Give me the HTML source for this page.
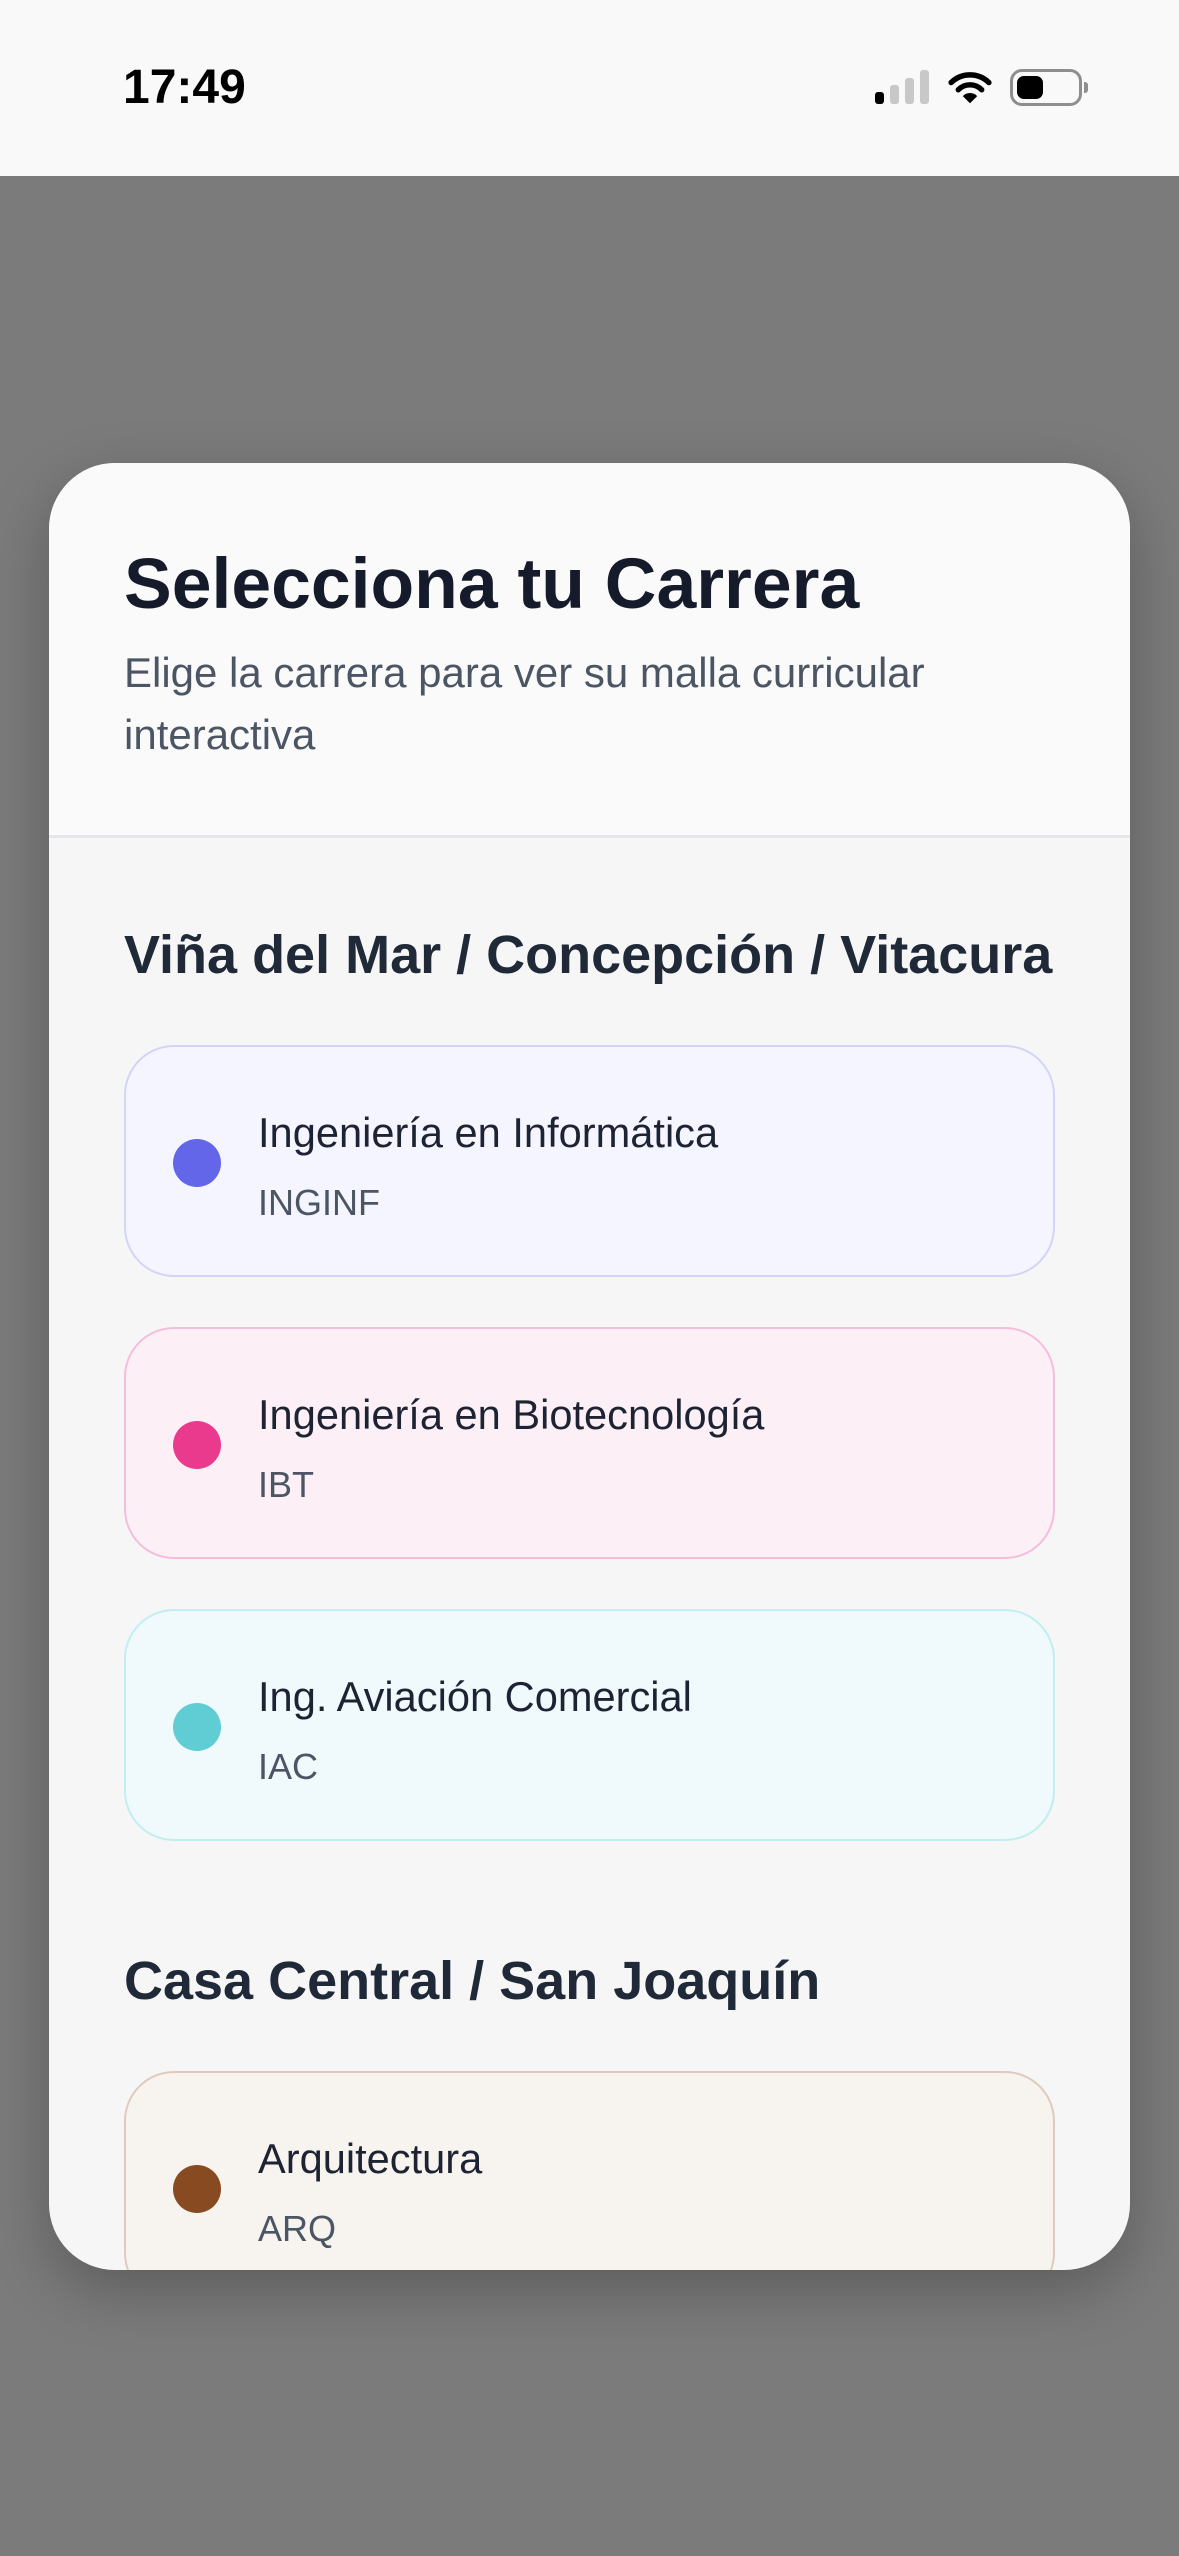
<!DOCTYPE html>
<html><head><meta charset="utf-8"><style>
*{margin:0;padding:0;box-sizing:border-box}
body{width:1179px;height:2556px;background:#7b7b7b;position:relative;overflow:hidden;font-family:"Liberation Sans",sans-serif}
.sb{position:absolute;left:0;top:0;width:1179px;height:176px;background:#f9f9f9}
.t{position:absolute;line-height:1;white-space:nowrap}
.modal{position:absolute;left:49px;top:463px;width:1081px;height:1807px;border-radius:66px;overflow:hidden;background:#f6f6f6;box-shadow:0 20px 60px rgba(0,0,0,.25)}
.hdr{position:absolute;left:0;top:0;width:100%;height:375px;background:#fafafa;border-bottom:3px solid #e5e6ea}
.card{position:absolute;left:75px;width:931px;height:232px;border:2.5px solid;border-radius:50px}
.dot{position:absolute;left:47px;top:92px;width:48px;height:48px;border-radius:50%}
.ct{position:absolute;left:132px;top:65px;font-size:41.6px;color:#1e2333;line-height:1;white-space:nowrap}
.cc{position:absolute;left:132px;top:138px;font-size:36px;color:#4b5563;line-height:1}
.sh{position:absolute;left:75px;font-size:54px;font-weight:bold;color:#1f2937;line-height:1;white-space:nowrap}
</style></head><body>
<div class="sb">
 <div class="t" style="left:123px;top:64px;font-size:48px;font-weight:bold;color:#000">17:49</div>
 <div style="position:absolute;left:875px;top:92px;width:9px;height:12px;border-radius:3px;background:#000"></div>
 <div style="position:absolute;left:890px;top:85px;width:9px;height:19px;border-radius:3px;background:#c8c8c8"></div>
 <div style="position:absolute;left:905px;top:78px;width:9px;height:26px;border-radius:3px;background:#c8c8c8"></div>
 <div style="position:absolute;left:920px;top:70px;width:9px;height:34px;border-radius:3px;background:#c8c8c8"></div>
 <svg style="position:absolute;left:947px;top:70px" width="46" height="36" viewBox="0 0 50 40">
  <path d="M4 14 A30 30 0 0 1 46 14" fill="none" stroke="#000" stroke-width="6" stroke-linecap="round"/>
  <path d="M12 22 A18 18 0 0 1 38 22" fill="none" stroke="#000" stroke-width="6" stroke-linecap="round"/>
  <path d="M17 29 L25 37 L33 29 A11 11 0 0 0 17 29 Z" fill="#000"/>
 </svg>
 <div style="position:absolute;left:1010px;top:69px;width:72px;height:37px;border:3px solid #8e8e8e;border-radius:12px"></div>
 <div style="position:absolute;left:1017px;top:76px;width:26px;height:23px;border-radius:7px;background:#000"></div>
 <div style="position:absolute;left:1084px;top:82px;width:4px;height:11px;border-radius:0 3px 3px 0;background:#8e8e8e"></div>
</div>
<div class="modal">
 <div class="hdr">
  <div class="t" style="left:75px;top:86px;font-size:71.5px;font-weight:bold;color:#161b2b">Selecciona tu Carrera</div>
  <div style="position:absolute;left:75px;top:179px;font-size:42px;line-height:62px;color:#4b5563;width:900px">Elige la carrera para ver su malla curricular<br>interactiva</div>
 </div>
 <div class="sh" style="top:465px">Viña del Mar / Concepción / Vitacura</div>
 <div class="card" style="top:582px;background:#f4f5fe;border-color:#d2d4f8"><div class="dot" style="background:#6366e9"></div><div class="ct">Ingeniería en Informática</div><div class="cc">INGINF</div></div>
 <div class="card" style="top:864px;background:#fcf0f6;border-color:#f5bddc"><div class="dot" style="background:#ea3a8e"></div><div class="ct">Ingeniería en Biotecnología</div><div class="cc">IBT</div></div>
 <div class="card" style="top:1146px;background:#f0f9fb;border-color:#c1eef0"><div class="dot" style="background:#5fcdd3"></div><div class="ct">Ing. Aviación Comercial</div><div class="cc">IAC</div></div>
 <div class="sh" style="top:1491px">Casa Central / San Joaquín</div>
 <div class="card" style="top:1608px;background:#f7f3ef;border-color:#dfcbbd"><div class="dot" style="background:#874a21"></div><div class="ct">Arquitectura</div><div class="cc">ARQ</div></div>
</div>
</body></html>
